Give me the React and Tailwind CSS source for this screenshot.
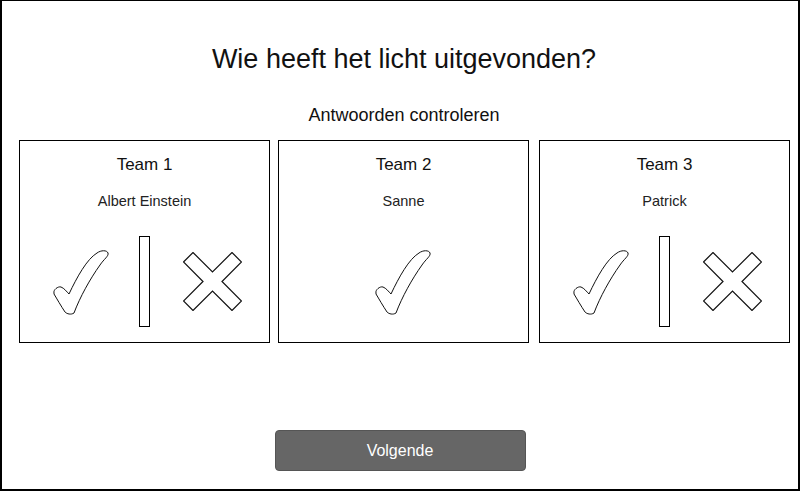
import React from "react";

function Check() {
  return (
    <svg width="60" height="70" viewBox="0 0 60 70" className="shrink-0">
      <path
        d="M 2 46 C 1 43, 6 39, 9 40 C 12 41, 15 45, 17 47 C 25 30, 35 12, 45 6 C 49 3, 55 3, 56 6 C 57 9, 52 12, 48 18 C 38 32, 28 50, 22 66 C 19 68, 15 67, 13 65 C 9 59, 5 52, 2 47 Z"
        fill="white"
        stroke="#111"
        strokeWidth="1"
      />
    </svg>
  );
}

function Cross() {
  return (
    <svg width="59" height="59" viewBox="0 0 59 59" className="shrink-0">
      <polygon
        points="0.5,10 10,0.5 29.5,20 49,0.5 58.5,10 39,29.5 58.5,49 49,58.5 29.5,39 10,58.5 0.5,49 20,29.5"
        fill="white"
        stroke="#111"
        strokeWidth="1.2"
      />
    </svg>
  );
}

function Bar() {
  return <div className="w-[11px] h-[91px] border border-black bg-white shrink-0" />;
}

function Card({ team, name, both, className }) {
  return (
    <div className={"w-[251px] h-[203px] border border-black flex flex-col items-center " + (className || "")}>
      <div className="mt-[13px] text-[17px] leading-[22px] text-[#111]">{team}</div>
      <div className="mt-[16px] text-[14.5px] leading-[18px] text-[#222]">{name}</div>
      {both ? (
        <div className="mt-[26px] w-full flex items-center pl-[32px] h-[91px]">
          <Check />
          <div className="w-[27px]" />
          <Bar />
          <div className="w-[33px]" />
          <Cross />
        </div>
      ) : (
        <div className="mt-[26px] w-full flex items-center justify-center h-[91px]">
          <Check />
        </div>
      )}
    </div>
  );
}

export default function App() {
  return (
    <div
      className="w-[800px] h-[491px] border-2 border-t border-black bg-white flex flex-col items-center"
      style={{ fontFamily: '"Liberation Sans", Arial, sans-serif' }}
    >
      <div className="mt-[43px] w-full pl-[8px] text-center text-[27px] leading-[31px] text-[#111]">
        Wie heeft het licht uitgevonden?
      </div>
      <div className="mt-[29px] w-full pl-[8px] text-center text-[18px] leading-[22px] text-[#111]">
        Antwoorden controleren
      </div>
      <div className="mt-[14px] w-full flex pl-[17px]">
        <Card team="Team 1" name="Albert Einstein" both />
        <Card team="Team 2" name="Sanne" className="ml-[8px]" />
        <Card team="Team 3" name="Patrick" both className="ml-[10px]" />
      </div>
      <div className="flex-1" />
      <button className="mb-[18px] w-[251px] h-[41px] rounded-[4px] bg-[#666666] border border-[#555] text-white text-[16px] flex items-center justify-center">
        Volgende
      </button>
    </div>
  );
}
